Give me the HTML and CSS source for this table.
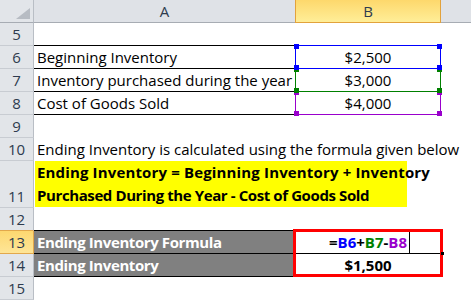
FILE: index.html
```html
<!DOCTYPE html>
<html>
<head>
<meta charset="utf-8">
<title>Ending Inventory</title>
<link rel="stylesheet" href="styles.css">
</head>
<body>
<div class="sheet">
  <div class="row hdr">
    <div class="rh corner"><svg class="tri" width="14" height="11" viewBox="0 0 14 11"><polygon points="14,0 14,11 0,11" fill="#b7bcc3"/></svg></div>
    <div class="ch">A</div>
    <div class="ch on">B</div>
    <div class="ch"></div>
  </div>
  <div class="row"><div class="rh">5</div><div class="c bb"></div><div class="c bb"></div><div class="c"></div></div>
  <div class="row"><div class="rh">6</div><div class="c bb">Beginning Inventory</div><div class="c bb num">$2,500</div><div class="c"></div></div>
  <div class="row"><div class="rh">7</div><div class="c bb">Inventory purchased during the year</div><div class="c bb num">$3,000</div><div class="c"></div></div>
  <div class="row"><div class="rh">8</div><div class="c bb">Cost of Goods Sold</div><div class="c bb num">$4,000</div><div class="c"></div></div>
  <div class="row"><div class="rh">9</div><div class="c"></div><div class="c"></div><div class="c"></div></div>
  <div class="row"><div class="rh">10</div><div class="c">Ending Inventory is calculated using the formula given below</div><div class="c"></div><div class="c"></div></div>
  <div class="row tall"><div class="rh">11</div><div class="c wide"><div class="note"><span class="l1">Ending Inventory = Beginning Inventory + Inventory</span><br><span class="l2">Purchased During the Year - Cost of Goods Sold</span></div></div><div class="c"></div></div>
  <div class="row"><div class="rh pre">12</div><div class="c bb"></div><div class="c bb"></div><div class="c"></div></div>
  <div class="row"><div class="rh on">13</div><div class="c bb dark">Ending Inventory Formula</div><div class="c bb num strong"><span class="k">=</span><span class="r1">B6</span><span class="k">+</span><span class="r2">B7</span><span class="k">-</span><span class="r3">B8</span><span class="caret"></span></div><div class="c"></div></div>
  <div class="row"><div class="rh">14</div><div class="c bb dark">Ending Inventory</div><div class="c bb num strong">$1,500</div><div class="c"></div></div>
  <div class="row"><div class="rh">15</div><div class="c"></div><div class="c"></div><div class="c"></div></div>

  <div class="hl p8"><i class="hd tl"></i><i class="hd tr"></i><i class="hd bl"></i><i class="hd br"></i></div>
  <div class="hl p7"><i class="hd tl"></i><i class="hd tr"></i><i class="hd bl"></i><i class="hd br"></i></div>
  <div class="hl p6"><i class="hd tl"></i><i class="hd tr"></i><i class="hd bl"></i><i class="hd br"></i></div>
  <div class="frame"></div>
  <div class="fill"></div>
</div>
</body>
</html>
```
FILE: styles.css
```css
* { box-sizing: border-box; margin: 0; padding: 0; }
body {
  margin: 0;
  background: #fff;
  font-family: "Open Sans", "Noto Sans", sans-serif;
  font-size: 15px;
  color: #000;
}
.sheet {
  position: relative;
  width: 471px;
  height: 300px;
  overflow: hidden;
}
.row {
  display: grid;
  grid-template-columns: 34px 261px 146px 30px;
  height: 23px;
}
.row.tall { height: 47px; }
.rh {
  background: #e2e5e9;
  border-right: 1px solid #b9bec5;
  border-bottom: 1px solid #c8ccd2;
  color: #2e3b4e;
  line-height: 22px;
  display: flex;
  align-items: flex-end;
  justify-content: center;
}
.rh.pre { border-bottom-color: #e2a84c; }
.rh.on {
  background: linear-gradient(#fdd870, #fee597);
  border-right-color: #e2a84c;
  border-bottom-color: #e2a84c;
}
.hdr .rh, .ch {
  border-bottom: 1px solid #a7acb3;
}
.corner {
  justify-content: flex-end;
  align-items: flex-end;
  padding: 0 3px 3px 0;
}
.ch {
  background: #dfe2e7;
  color: #2e3b4e;
  line-height: 22px;
  text-align: center;
}
.ch.on {
  background: linear-gradient(#fdd86c, #ffee98);
  border-left: 1px solid #e2a23c;
  border-right: 1px solid #e2a23c;
  border-bottom-color: #e2a23c;
}
.c {
  padding: 0 3px;
  line-height: 22px;
  white-space: nowrap;
  border-bottom: 1px solid transparent;
  overflow: visible;
}
.c.bb { border-bottom-color: #000; }
.c.num { text-align: center; }
.c.strong { font-weight: bold; }
.c.dark {
  background: #808080;
  color: #fff;
  font-weight: bold;
  letter-spacing: -0.4px;
}
.c.wide {
  grid-column: 2 / 4;
  padding: 0;
}
.note {
  width: 372px;
  height: 46px;
  margin-left: 1px;
  padding: 0 2px;
  background: #ffff00;
  font-weight: bold;
  line-height: 23px;
  white-space: nowrap;
}
.l1 { letter-spacing: 0.15px; }
.l2 { letter-spacing: -0.4px; }
.r1 { color: #0000ff; }
.r2 { color: #008000; }
.r3 { color: #9900cc; }
.caret {
  display: inline-block;
  width: 1px;
  height: 22px;
  background: #000;
  vertical-align: top;
  margin-left: 2px;
  margin-right: -3px;
}
.hl {
  position: absolute;
  left: 295px;
  width: 146px;
  height: 24px;
  border: 1px solid currentColor;
}
.hl.p6 { top: 45px; color: #0000ff; }
.hl.p7 { top: 68px; color: #008000; }
.hl.p8 { top: 91px; color: #9900cc; }
.hd {
  position: absolute;
  width: 5px;
  height: 5px;
  background: currentColor;
}
.hd.tl { left: -2px; top: -2px; }
.hd.tr { right: -2px; top: -2px; }
.hd.bl { left: -2px; bottom: -2px; }
.hd.br { right: -2px; bottom: -2px; }
.frame {
  position: absolute;
  left: 293px;
  top: 229px;
  width: 150px;
  height: 48px;
  border: 3px solid #ff0000;
}
.fill {
  position: absolute;
  left: 441px;
  top: 252px;
  width: 3px;
  height: 3px;
  background: #000;
}
```
